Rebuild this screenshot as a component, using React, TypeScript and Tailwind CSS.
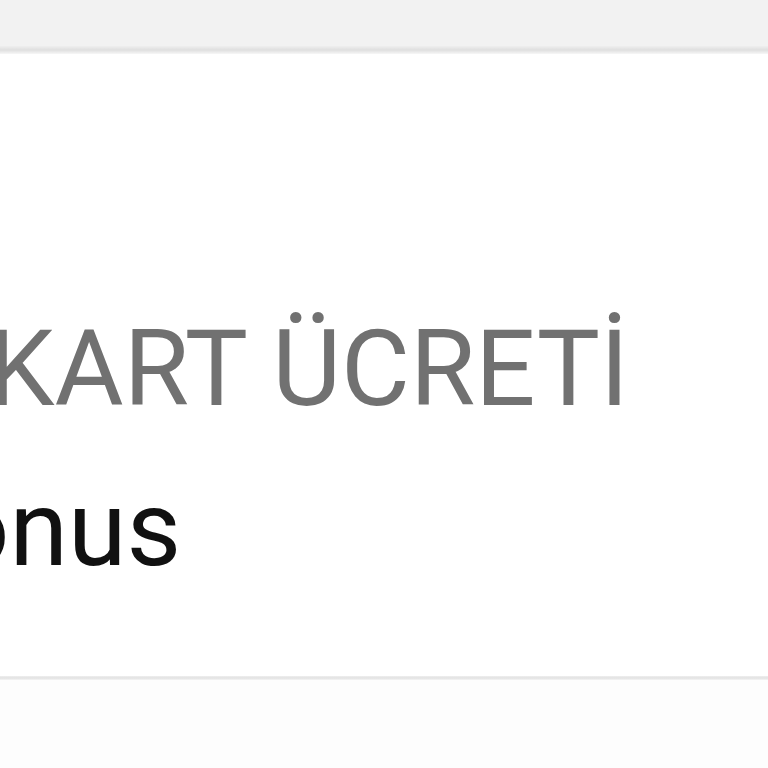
export default function App() {
  return (
    <div className="flex h-[768px] w-[768px] flex-col overflow-hidden bg-[#fdfdfd] font-['Roboto',sans-serif]">
      {/* top bar */}
      <div className="h-[46px] bg-[#f2f2f2]" />
      <div className="h-[8px] bg-gradient-to-b from-[#efefef] via-[#dfdfdf] to-[#f7f7f7]" />

      {/* card */}
      <div className="flex h-[622px] flex-col overflow-hidden bg-white pt-[262px]">
        <div className="ml-[-12px] whitespace-nowrap text-[106px] leading-[106px] text-[#717171]">
          KART ÜCRETİ
        </div>
        <div className="ml-[-117px] mt-[54px] whitespace-nowrap text-[106px] leading-[106px] text-[#111111]">
          Bonus
        </div>
      </div>

      <div className="h-[4px] bg-gradient-to-b from-[#efefef] via-[#e2e2e2] to-[#f5f5f5]" />
      <div className="flex-1 bg-[#fdfdfd]" />
    </div>
  );
}
